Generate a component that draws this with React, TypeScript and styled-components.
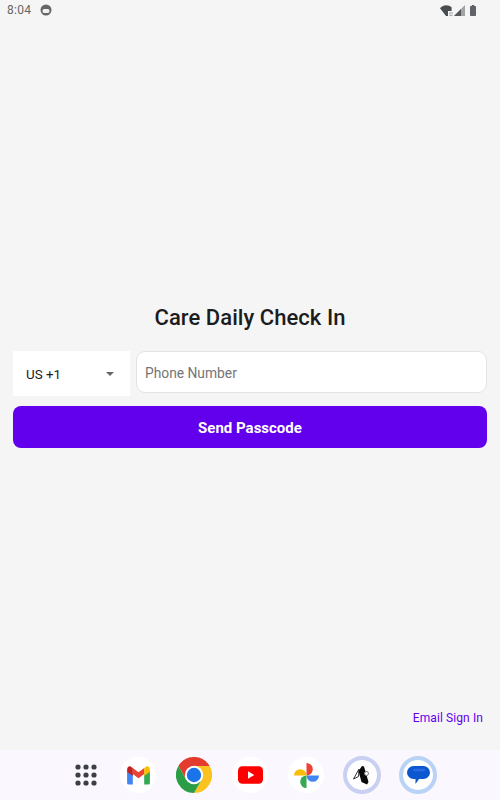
import React from "react";
import styled, { createGlobalStyle } from "styled-components";

const GlobalStyle = createGlobalStyle`
  html, body {
    margin: 0;
    padding: 0;
    background: #f5f5f5;
    font-family: Roboto, "Liberation Sans", sans-serif;
  }
`;

const Screen = styled.div`
  width: 500px;
  height: 800px;
  display: flex;
  flex-direction: column;
  overflow: hidden;
  background: #f5f5f5;
`;

const StatusBar = styled.div`
  height: 20px;
  padding: 0 24px 0 7px;
  display: flex;
  align-items: center;
  justify-content: space-between;
  color: #5f6368;
`;

const StatusGroup = styled.div<{ $gap: number }>`
  display: flex;
  align-items: center;
  gap: ${(p) => p.$gap}px;
`;

const Time = styled.span`
  font-size: 12px;
  letter-spacing: 0.3px;
  color: #666;
`;

const Main = styled.main`
  flex: 1;
  display: flex;
  flex-direction: column;
  padding: 285px 13px 0;
`;

const Title = styled.h1`
  margin: 0 0 18px;
  height: 28px;
  line-height: 26px;
  text-align: center;
  font-size: 22px;
  font-weight: 500;
  letter-spacing: 0.05px;
  color: #1c1c1c;
`;

const PhoneRow = styled.div`
  display: flex;
  align-items: flex-start;
  gap: 6px;
`;

const CountrySelect = styled.div`
  width: 117px;
  height: 45px;
  box-sizing: border-box;
  padding: 1px 16px 0 13px;
  display: flex;
  align-items: center;
  justify-content: space-between;
  background: #fff;
  font-size: 13.4px;
  color: #1c1c1c;
`;

const Caret = styled.span`
  width: 0;
  height: 0;
  border-left: 4px solid transparent;
  border-right: 4px solid transparent;
  border-top: 4px solid #666;
`;

const PhoneInput = styled.input`
  flex: 1;
  min-width: 0;
  height: 42px;
  box-sizing: border-box;
  padding: 1px 7px 0 8px;
  background: #fff;
  border: 1px solid #e3e3e3;
  border-radius: 9px;
  outline: none;
  font-family: inherit;
  font-size: 13.8px;

  &::placeholder {
    color: #757575;
    opacity: 1;
  }
`;

const SendButton = styled.button`
  margin-top: 10px;
  height: 42px;
  padding: 2px 0 0;
  border: none;
  border-radius: 8px;
  background: #6200ee;
  color: #fff;
  font-family: inherit;
  font-size: 15px;
  font-weight: 700;
`;

const EmailLink = styled.a`
  margin-top: auto;
  margin-bottom: 25px;
  align-self: flex-end;
  padding-right: 4px;
  font-size: 12px;
  letter-spacing: 0.1px;
  line-height: 14px;
  color: #6200ee;
`;

const Dock = styled.nav`
  height: 50px;
  padding-left: 8px;
  box-sizing: border-box;
  display: flex;
  align-items: center;
  justify-content: center;
  gap: 16px;
  background: #faf7fe;
`;

const DockSlot = styled.div<{ $narrow?: boolean }>`
  width: ${(p) => (p.$narrow ? 32 : 40)}px;
  height: 50px;
  display: flex;
  align-items: center;
  justify-content: center;
`;

const AppIcon = styled.div<{ $ring?: string }>`
  width: 36px;
  height: 36px;
  flex: none;
  box-sizing: border-box;
  border-radius: 50%;
  background: #fff;
  display: flex;
  align-items: center;
  justify-content: center;
  ${(p) => (p.$ring ? `width: 38px; height: 38px; border: 4px solid ${p.$ring};` : "")}
`;

const GridDots = () => (
  <svg width="22" height="22" viewBox="0 0 22 22" fill="#3c4043" style={{ flex: "none" }}>
    {[3, 11, 19].flatMap((y) =>
      [3, 11, 19].map((x) => <circle key={`${x}-${y}`} cx={x} cy={y} r="2.6" />)
    )}
  </svg>
);

const Gmail = () => (
  <svg width="25" height="19" viewBox="0 0 26 20">
    <path d="M1 5v13a1.6 1.6 0 0 0 1.6 1.6H7V8z" fill="#4285f4" />
    <path d="M19 8v11.6h4.4A1.6 1.6 0 0 0 25 18V5z" fill="#34a853" />
    <path d="M7 8.5 13 13l6-4.5V2l-6 4.6L7 2z" fill="#ea4335" />
    <path d="M1 3.8V6l6 4.5V2L5 .7C3.2-.5 1 .9 1 3.8z" fill="#c5221f" />
    <path d="M25 3.8V6l-6 4.5V2l2-1.3c1.8-1.2 4 .2 4 3.1z" fill="#fbbc04" />
  </svg>
);

const Chrome = () => (
  <svg width="36" height="36" viewBox="0 0 36 36" style={{ flex: "none" }}>
    <path d="M18 18 10.2 22.5 2.4 9A18 18 0 0 1 33.6 9H18z" fill="#e33b2e" />
    <path d="M18 18V9h15.6A18 18 0 0 1 18 36l7.8-13.5z" fill="#fcc31e" />
    <path d="M18 18l7.8 4.5L18 36A18 18 0 0 1 2.4 9l7.8 13.5z" fill="#2a9d46" />
    <circle cx="18" cy="18" r="9.2" fill="#fff" />
    <circle cx="18" cy="18" r="7.2" fill="#1a73e8" />
  </svg>
);

const YouTube = () => (
  <svg width="25" height="18" viewBox="0 0 26 18">
    <rect width="26" height="18" rx="4.5" fill="#ff0000" />
    <path d="M10.4 5.2v7.6l6.6-3.8z" fill="#fff" />
  </svg>
);

const Photos = () => (
  <svg width="27" height="27" viewBox="0 0 28 28">
    <path d="M14 14V1a6.5 6.5 0 0 1 0 13z" fill="#ea4335" />
    <path d="M14 14h13a6.5 6.5 0 0 1-13 0z" fill="#4285f4" />
    <path d="M14 14v13a6.5 6.5 0 0 1 0-13z" fill="#34a853" />
    <path d="M14 14H1a6.5 6.5 0 0 1 13 0z" fill="#fbbc04" />
  </svg>
);

const CareApp = () => (
  <svg width="20" height="20" viewBox="0 0 20 20" style={{ flex: "none" }}>
    <path d="M7 4 1.5 14 6.5 11.5z" fill="#fff" stroke="#333" strokeWidth="1" />
    <path d="M6.5 6 10 1l2 .5 4.5 15.5-1.5 2.5-5.5-2.5z" fill="#0a0a0a" />
    <circle cx="14.5" cy="8.5" r="2" fill="#fff" stroke="#777" strokeWidth="1" />
  </svg>
);

const Messages = () => (
  <svg width="23" height="18" viewBox="0 0 23 18">
    <path
      d="M6.5 0h10A6.5 6.5 0 0 1 23 6.5a6.5 6.5 0 0 1-6.5 6.5H12l-3.5 5V13h-2A6.5 6.5 0 0 1 0 6.5 6.5 6.5 0 0 1 6.5 0z"
      fill="#0b57d0"
    />
    <path d="M7 4h10" stroke="#2a6ae0" strokeWidth="2.4" strokeLinecap="round" />
  </svg>
);

const MessengerStatus = () => (
  <svg width="12" height="12" viewBox="0 0 12 12">
    <circle cx="6" cy="6" r="5.5" fill="#666" />
    <rect x="2.6" y="5" width="6.8" height="4" rx="1.6" fill="#f0f0f0" />
  </svg>
);

const Wifi = () => (
  <svg width="13" height="11" viewBox="0 0 13 11">
    <path d="M0 3.2C3-.6 8.5-.8 11.6 2.2V6L8 6v5L6 11z" fill="#4a4d50" />
    <path d="M9.5 7h1.2v2.6H9.5zM11.5 7h1v2.6h-1zM9.5 10h3v1h-3z" fill="#a8aaac" />
  </svg>
);

const Signal = () => (
  <svg width="11" height="11" viewBox="0 0 11 11">
    <path d="M11 0v11H0z" fill="#a0a2a5" />
    <path d="M7 4v7H0z" fill="#55585b" />
  </svg>
);

const Battery = () => (
  <svg width="6" height="11" viewBox="0 0 6 11">
    <rect x="1.8" width="2.4" height="1.4" fill="#5f6368" />
    <rect y="1" width="6" height="10" rx="0.8" fill="#5f6368" />
  </svg>
);

const SignalCluster = styled.div`
  display: flex;
  align-items: center;
  gap: 1px;
  margin-right: 5px;
`;

const App = () => {
  return (
    <Screen>
      <GlobalStyle />
      <StatusBar>
        <StatusGroup $gap={9}>
          <Time>8:04</Time>
          <MessengerStatus />
        </StatusGroup>
        <StatusGroup $gap={0}>
          <SignalCluster>
            <Wifi />
            <Signal />
          </SignalCluster>
          <Battery />
        </StatusGroup>
      </StatusBar>
      <Main>
        <Title>Care Daily Check In</Title>
        <PhoneRow>
          <CountrySelect>
            US +1
            <Caret />
          </CountrySelect>
          <PhoneInput placeholder="Phone Number" />
        </PhoneRow>
        <SendButton>Send Passcode</SendButton>
        <EmailLink>Email Sign In</EmailLink>
      </Main>
      <Dock>
        <DockSlot $narrow>
          <GridDots />
        </DockSlot>
        <DockSlot>
          <AppIcon>
            <Gmail />
          </AppIcon>
        </DockSlot>
        <DockSlot>
          <AppIcon>
            <Chrome />
          </AppIcon>
        </DockSlot>
        <DockSlot>
          <AppIcon>
            <YouTube />
          </AppIcon>
        </DockSlot>
        <DockSlot>
          <AppIcon>
            <Photos />
          </AppIcon>
        </DockSlot>
        <DockSlot>
          <AppIcon $ring="#c9d0f2">
            <CareApp />
          </AppIcon>
        </DockSlot>
        <DockSlot>
          <AppIcon $ring="#b9d3f7">
            <Messages />
          </AppIcon>
        </DockSlot>
      </Dock>
    </Screen>
  );
};

export default App;
